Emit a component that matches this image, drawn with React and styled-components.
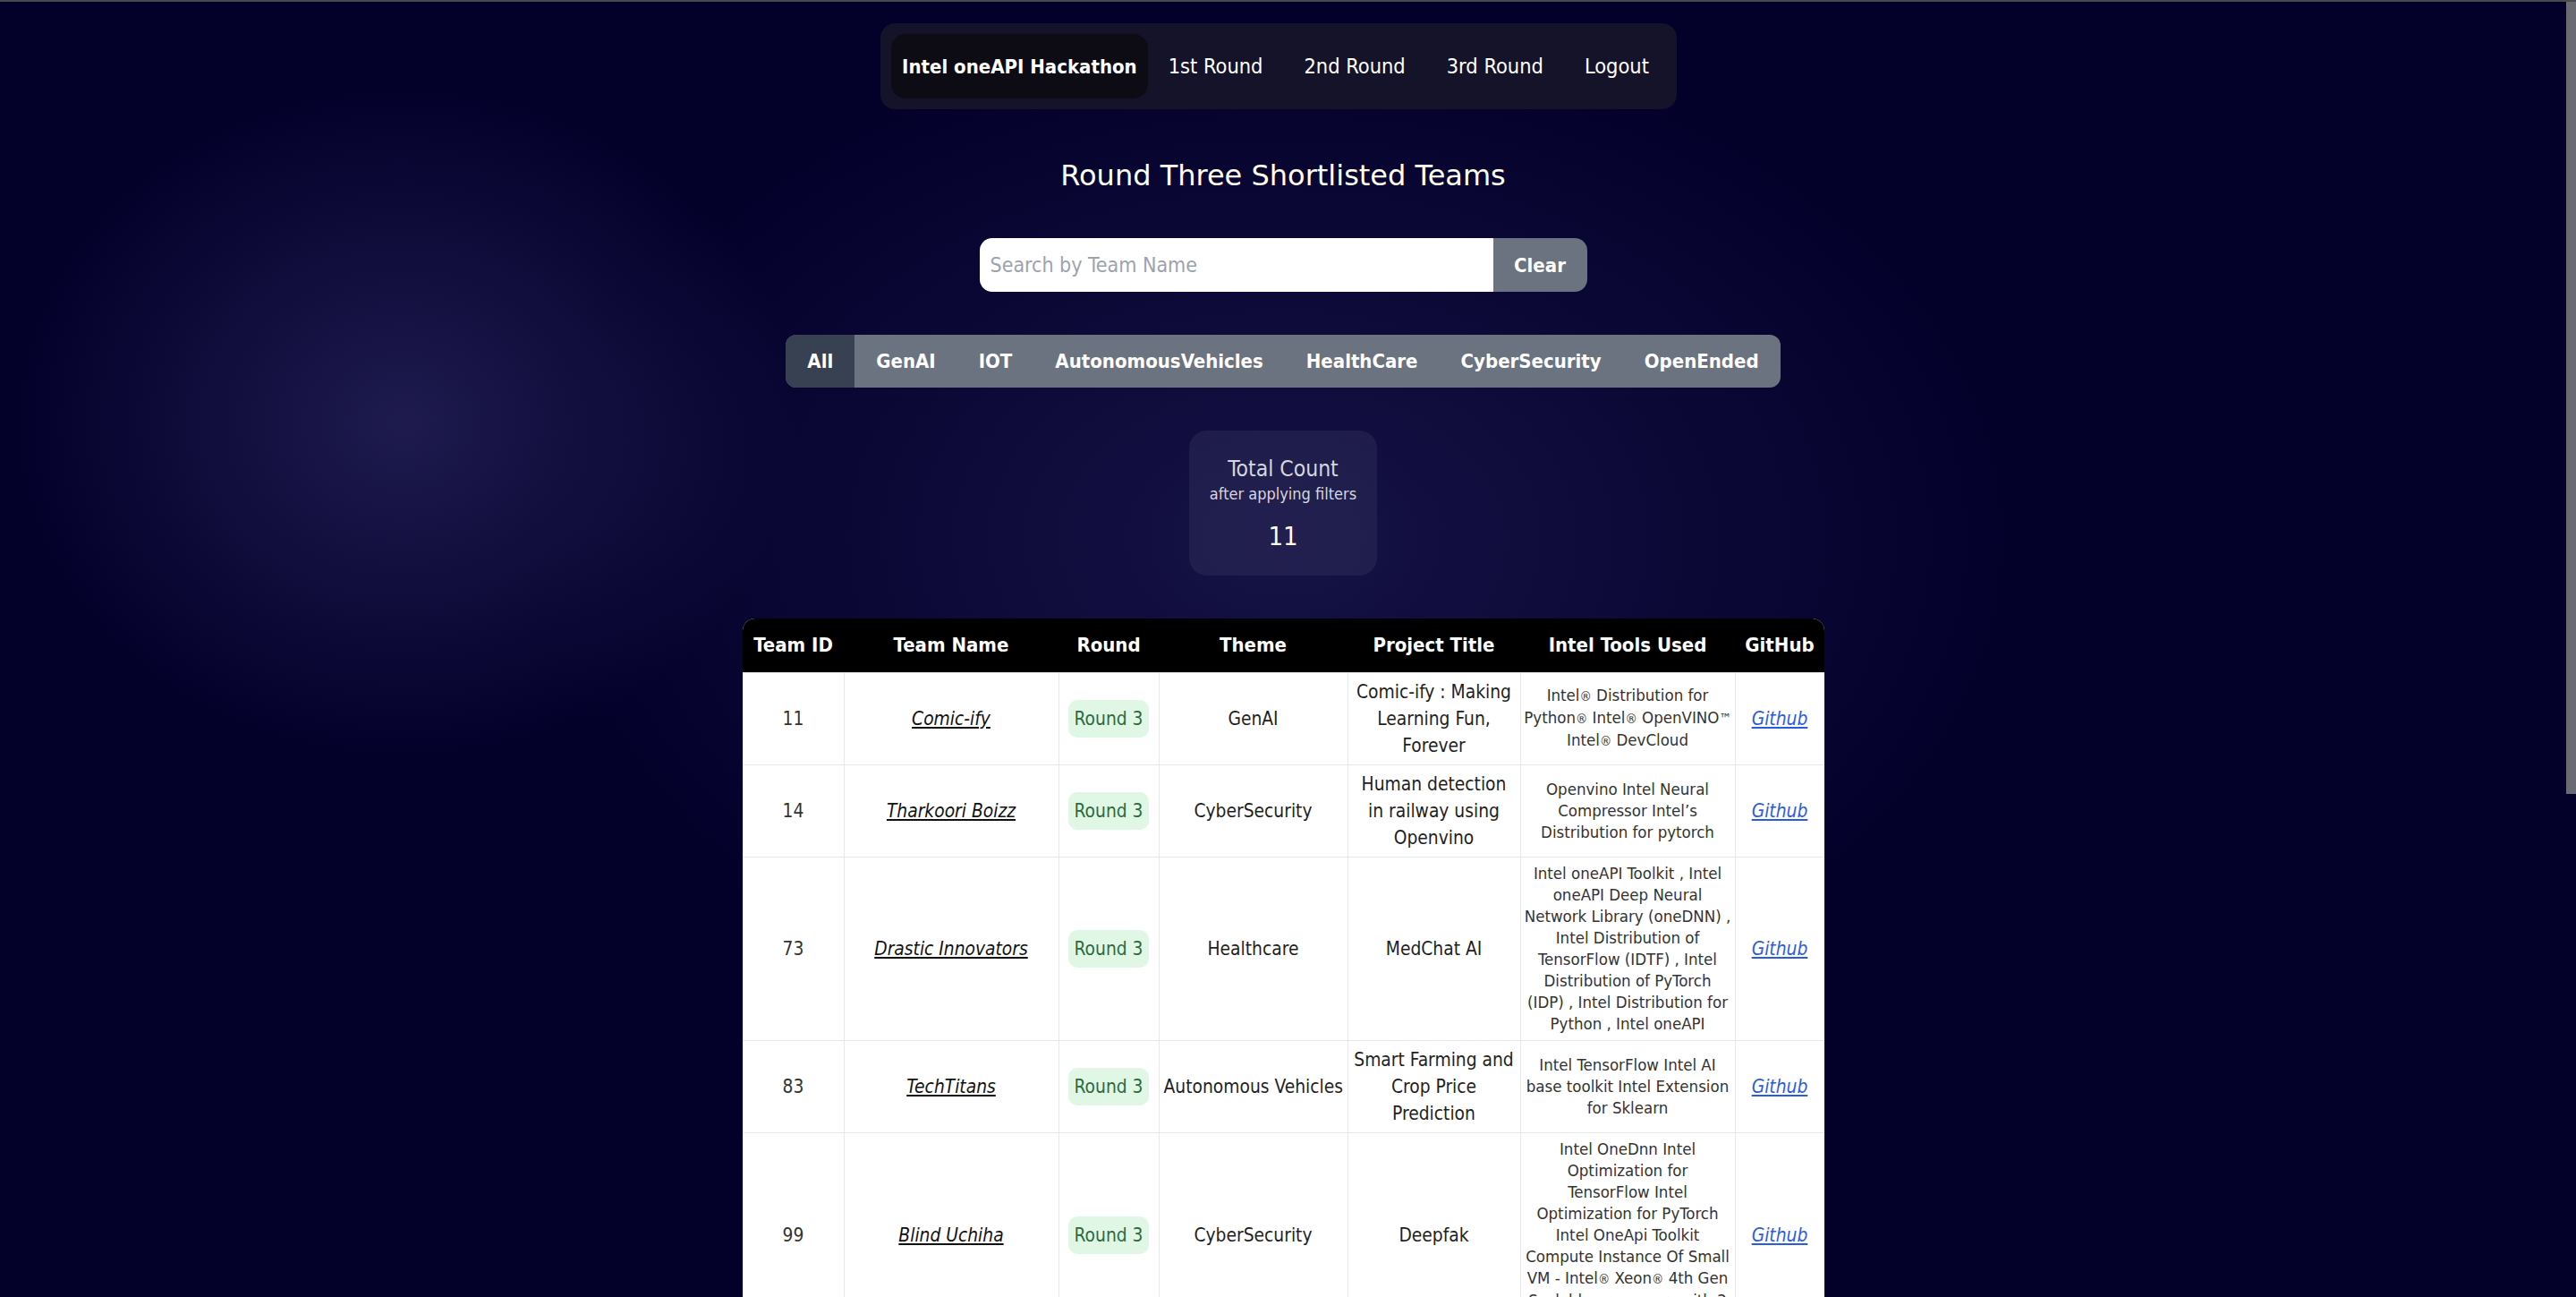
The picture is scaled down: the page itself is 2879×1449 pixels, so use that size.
import React, { useState } from 'react';
import styled, { createGlobalStyle } from 'styled-components';

const GlobalStyle = createGlobalStyle`
  html, body {
    margin: 0;
    padding: 0;
    height: 100%;
    overflow: hidden;
    background: #03002a;
  }
  #root {
    height: 100%;
  }
  * {
    box-sizing: border-box;
  }
`;

const Page = styled.div`
  display: grid;
  grid-template-columns: minmax(0, 1fr) 11px;
  grid-template-rows: minmax(0, 1fr);
  height: 100vh;
  border-top: 2px solid #4a4a50;
  font-family: "DejaVu Sans Condensed", "DejaVu Sans", sans-serif;
  font-stretch: condensed;
  background:
    radial-gradient(ellipse 440px 380px at 450px 470px, rgba(52, 48, 108, 0.55), rgba(52, 48, 108, 0) 100%),
    radial-gradient(ellipse 840px 580px at 1434px 600px, rgba(34, 31, 88, 0.6), rgba(34, 31, 88, 0) 100%),
    #03002a;
`;

const ScrollArea = styled.div`
  min-height: 0;
  overflow-y: auto;
  scrollbar-width: none;

  &::-webkit-scrollbar {
    display: none;
  }
`;

const ScrollRail = styled.div`
  display: flex;
  flex-direction: column;
`;

const ScrollThumb = styled.div`
  height: 885px;
  background: #6a6a72;
`;

const Main = styled.main`
  display: flex;
  flex-direction: column;
  align-items: center;
  padding: 24px 0 60px;
`;

/* top navigation */
const NavBar = styled.nav`
  display: flex;
  align-items: center;
  padding: 12px 8px 12px 12px;
  margin-right: 10px;
  background: #14132a;
  border-radius: 16px;
`;

const NavItem = styled.a`
  display: flex;
  align-items: center;
  height: 72px;
  padding: 0 ${props => props.$active ? '12px' : '23px'};
  border-radius: 16px;
  background: ${props => props.$active ? '#0d0c15' : 'transparent'};
  color: #ffffff;
  font-size: ${props => props.$active ? '22px' : '23.4px'};
  font-weight: ${props => props.$active ? 700 : 400};
  text-decoration: none;
  white-space: nowrap;
  cursor: pointer;
`;

const Title = styled.h1`
  margin: 54px 0 0;
  font-size: 32px;
  line-height: 40px;
  font-weight: 400;
  font-stretch: normal;
  font-family: "DejaVu Sans", sans-serif;
  color: #fffff0;
`;

/* search */
const SearchBox = styled.div`
  display: flex;
  width: 679px;
  height: 60px;
  margin-top: 50px;
  border-radius: 14px;
  overflow: hidden;
`;

const SearchInput = styled.input`
  flex: 1;
  min-width: 0;
  border: 0;
  outline: none;
  padding: 0 12px;
  background: #ffffff;
  color: #111;
  font-family: inherit;
  font-stretch: inherit;
  font-size: 23px;

  &::placeholder {
    color: #9ca3af;
  }
`;

const ClearButton = styled.button`
  width: 105px;
  border: 0;
  background: #6b7280;
  color: #ffffff;
  font-family: inherit;
  font-stretch: inherit;
  font-size: 22px;
  font-weight: 700;
  cursor: pointer;
`;

/* theme filter */
const FilterBar = styled.div`
  display: flex;
  height: 59px;
  margin-top: 48px;
  border-radius: 12px;
  overflow: hidden;
  background: #6b7280;
`;

const FilterButton = styled.button`
  padding: 0 24px;
  border: 0;
  background: ${props => props.$active ? '#374151' : 'transparent'};
  color: #ffffff;
  font-family: inherit;
  font-stretch: inherit;
  font-size: 22px;
  font-weight: 700;
  cursor: pointer;
`;

/* count card */
const CountCard = styled.div`
  margin-top: 48px;
  padding: 28px 23px 24px;
  border-radius: 20px;
  background: rgba(255, 255, 255, 0.06);
  text-align: center;
`;

const CountLabel = styled.div`
  font-size: 24.5px;
  line-height: 30px;
  color: #d6d6de;
`;

const CountHint = styled.div`
  font-size: 18px;
  line-height: 26px;
  color: #d6d6de;
`;

const CountValue = styled.div`
  margin-top: 14px;
  font-size: 29px;
  line-height: 40px;
  color: #fffff0;
`;

/* table */
const TableWrap = styled.div`
  width: 1209px;
  margin-top: 48px;
  border-radius: 14px 14px 0 0;
  overflow: hidden;
  background: #ffffff;
`;

const Table = styled.table`
  width: 100%;
  border-collapse: collapse;
  table-layout: fixed;
`;

const HeadCell = styled.th`
  height: 60px;
  padding: 0 4px;
  background: #000000;
  color: #ffffff;
  font-size: 22px;
  font-weight: 700;
  text-align: center;
  white-space: nowrap;
`;

const Cell = styled.td`
  padding: ${props => props.$small ? '6px 1px' : '6px 5px'};
  border: 1px solid #e5e7eb;
  text-align: center;
  vertical-align: middle;
  color: ${props => props.$muted ? '#333' : '#1f1f1f'};
  font-size: ${props => props.$small ? '18.5px' : '20.8px'};
  line-height: ${props => props.$small ? '24px' : '30px'};
  white-space: ${props => props.$nowrap ? 'nowrap' : 'normal'};
`;

const ToolLine = styled.span`
  display: block;
  white-space: nowrap;
`;

const Mark = styled.span`
  font-size: 0.8em;
`;

const TeamLink = styled.a`
  color: #111;
  font-style: italic;
  text-decoration: underline;
`;

const RoundBadge = styled.span`
  display: inline-block;
  padding: 6px 7px;
  border-radius: 10px;
  background: #e0f7e6;
  color: #2d6a3e;
`;

const RepoLink = styled.a`
  color: #2b5ce0;
  font-style: italic;
  text-decoration: underline;
`;

const navLinks = ['1st Round', '2nd Round', '3rd Round', 'Logout'];
const themes = ['All', 'GenAI', 'IOT', 'AutonomousVehicles', 'HealthCare', 'CyberSecurity', 'OpenEnded'];
const columns = [
  { label: 'Team ID', width: 113 },
  { label: 'Team Name', width: 240 },
  { label: 'Round', width: 112 },
  { label: 'Theme', width: 211 },
  { label: 'Project Title', width: 193 },
  { label: 'Intel Tools Used', width: 240 },
  { label: 'GitHub', width: 100 },
];

const teams = [
  {
    id: 11,
    name: 'Comic-ify',
    theme: 'GenAI',
    title: 'Comic-ify : Making Learning Fun, Forever',
    tools: ['Intel® Distribution for', 'Python® Intel® OpenVINO™', 'Intel® DevCloud'],
  },
  {
    id: 14,
    name: 'Tharkoori Boizz',
    theme: 'CyberSecurity',
    title: 'Human detection in railway using Openvino',
    tools: ['Openvino Intel Neural', 'Compressor Intel’s', 'Distribution for pytorch'],
  },
  {
    id: 73,
    name: 'Drastic Innovators',
    theme: 'Healthcare',
    title: 'MedChat AI',
    tools: [
      'Intel oneAPI Toolkit , Intel',
      'oneAPI Deep Neural',
      'Network Library (oneDNN) ,',
      'Intel Distribution of',
      'TensorFlow (IDTF) , Intel',
      'Distribution of PyTorch',
      '(IDP) , Intel Distribution for',
      'Python , Intel oneAPI',
    ],
  },
  {
    id: 83,
    name: 'TechTitans',
    theme: 'Autonomous Vehicles',
    title: 'Smart Farming and Crop Price Prediction',
    tools: ['Intel TensorFlow Intel AI', 'base toolkit Intel Extension', 'for Sklearn'],
  },
  {
    id: 99,
    name: 'Blind Uchiha',
    theme: 'CyberSecurity',
    title: 'Deepfak',
    tools: [
      'Intel OneDnn Intel',
      'Optimization for',
      'TensorFlow Intel',
      'Optimization for PyTorch',
      'Intel OneApi Toolkit',
      'Compute Instance Of Small',
      'VM - Intel® Xeon® 4th Gen',
      'Scalable processors with 2',
      'vCPUs',
    ],
  },
];

const normalize = value => value.replace(/\s+/g, '').toLowerCase();

// trademark signs are drawn a little smaller, as the reference font does
const withMarks = text =>
  text.split(/([®™])/).map((part, i) => (part === '®' || part === '™' ? <Mark key={i}>{part}</Mark> : part));

const App = () => {
  const [query, setQuery] = useState('');
  const [theme, setTheme] = useState('All');

  const visibleTeams = teams.filter(team => {
    const matchesName = team.name.toLowerCase().includes(query.toLowerCase());
    const matchesTheme = theme === 'All' || normalize(team.theme) === normalize(theme);
    return matchesName && matchesTheme;
  });

  return (
    <Page>
      <GlobalStyle />
      <ScrollArea>
        <Main>
          <NavBar>
            <NavItem $active>Intel oneAPI Hackathon</NavItem>
            {navLinks.map(link => (
              <NavItem key={link}>{link}</NavItem>
            ))}
          </NavBar>

          <Title>Round Three Shortlisted Teams</Title>

          <SearchBox>
            <SearchInput
              placeholder="Search by Team Name"
              value={query}
              onChange={e => setQuery(e.target.value)}
            />
            <ClearButton onClick={() => setQuery('')}>Clear</ClearButton>
          </SearchBox>

          <FilterBar>
            {themes.map(item => (
              <FilterButton key={item} $active={item === theme} onClick={() => setTheme(item)}>
                {item}
              </FilterButton>
            ))}
          </FilterBar>

          <CountCard>
            <CountLabel>Total Count</CountLabel>
            <CountHint>after applying filters</CountHint>
            <CountValue>11</CountValue>
          </CountCard>

          <TableWrap>
            <Table>
              <colgroup>
                {columns.map(col => (
                  <col key={col.label} style={{ width: col.width }} />
                ))}
              </colgroup>
              <thead>
                <tr>
                  {columns.map(col => (
                    <HeadCell key={col.label}>{col.label}</HeadCell>
                  ))}
                </tr>
              </thead>
              <tbody>
                {visibleTeams.map(team => (
                  <tr key={team.id}>
                    <Cell $muted>{team.id}</Cell>
                    <Cell>
                      <TeamLink>{team.name}</TeamLink>
                    </Cell>
                    <Cell>
                      <RoundBadge>Round 3</RoundBadge>
                    </Cell>
                    <Cell $nowrap>{team.theme}</Cell>
                    <Cell>{team.title}</Cell>
                    <Cell $small $muted>
                      {team.tools.map(line => (
                        <ToolLine key={line}>{withMarks(line)}</ToolLine>
                      ))}
                    </Cell>
                    <Cell>
                      <RepoLink>Github</RepoLink>
                    </Cell>
                  </tr>
                ))}
              </tbody>
            </Table>
          </TableWrap>
        </Main>
      </ScrollArea>
      <ScrollRail>
        <ScrollThumb />
      </ScrollRail>
    </Page>
  );
};

export default App;
